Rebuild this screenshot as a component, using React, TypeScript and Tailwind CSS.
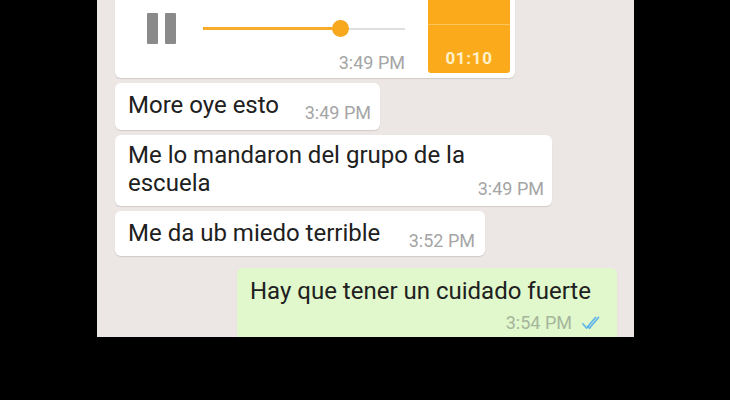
import React from "react";

const font = { fontFamily: "Roboto, 'Noto Sans', Arial, sans-serif" };

function Checks() {
  return (
    <svg width="21" height="14" viewBox="0 0 21 14" fill="none" stroke="#62b5e8" strokeWidth="1.8" strokeLinecap="round" strokeLinejoin="round">
      <path d="M1 8 L4.6 12 L13.5 1.5" />
      <path d="M7.6 12 L16.5 1.5" />
      <path d="M6 10.4 L7.6 12" />
    </svg>
  );
}

export default function App() {
  return (
    <div className="w-[730px] h-[400px] bg-black overflow-hidden" style={font}>
      <div className="ml-[97px] w-[537px] h-[337px] overflow-hidden bg-[#ece6e4] flex flex-col pl-[18px]">
        {/* audio bubble */}
        <div className="mt-[-12px] h-[90px] w-[400px] shrink-0 bg-white rounded-[6px] shadow-[0_1px_1px_rgba(0,0,0,0.12)] flex">
          <div className="pl-[32px] pt-[25px] flex flex-col w-[290px]">
            <div className="flex items-center h-[31px]">
              <div className="w-[11px] h-[31px] bg-[#8a8a8a] rounded-[1px]" />
              <div className="w-[11px] h-[31px] bg-[#8a8a8a] rounded-[1px] ml-[7px]" />
              <div className="relative ml-[27px] w-[202px] h-[31px] flex items-center">
                <div className="w-[138px] h-[3px] bg-[#f7ad2a]" />
                <div className="flex-1 h-[2px] bg-[#dedede]" />
                <div className="absolute left-[129px] top-[7px] w-[17px] h-[17px] rounded-full bg-[#f8a81c]" />
              </div>
            </div>
            <div className="mt-[9px] w-[258px] text-right text-[18px] leading-[20px] text-[#a5a5a5]">3:49 PM</div>
          </div>
          <div className="ml-[23px] mt-[5px] mb-[5px] w-[82px] bg-[#fbaa1b] rounded-[3px] flex flex-col">
            <div className="mt-[31px] h-px bg-[#fcc55e]" />
            <div className="flex-1" />
            <div className="pb-[5px] text-center text-[17px] leading-[20px] font-bold tracking-[0.04em] text-[#fff1c9]">01:10</div>
          </div>
        </div>

        {/* More oye esto */}
        <div className="mt-[5px] w-[265px] shrink-0 bg-white rounded-[6px] shadow-[0_1px_1px_rgba(0,0,0,0.12)] pl-[13px] pr-[9px] pt-[8px] pb-[11px] flex items-end justify-between">
          <span className="text-[24px] leading-[28px] text-[#202020] whitespace-nowrap">More oye esto</span>
          <span className="mb-[-4px] text-[18px] leading-[20px] text-[#a5a5a5] whitespace-nowrap">3:49 PM</span>
        </div>

        {/* Me lo mandaron */}
        <div className="mt-[5px] w-[437px] shrink-0 bg-white rounded-[6px] shadow-[0_1px_1px_rgba(0,0,0,0.12)] pl-[13px] pr-[8px] pt-[6px] pb-[7px] flex flex-col">
          <span className="text-[24px] leading-[28px] text-[#202020]">
            Me lo mandaron del grupo de la
            <br />
            escuela
          </span>
          <span className="self-end mt-[-18px] text-[18px] leading-[20px] text-[#a5a5a5] whitespace-nowrap">3:49 PM</span>
        </div>

        {/* Me da ub miedo terrible */}
        <div className="mt-[5px] w-[370px] shrink-0 bg-white rounded-[6px] shadow-[0_1px_1px_rgba(0,0,0,0.12)] pl-[13px] pr-[10px] pt-[8px] pb-[9px] flex items-end justify-between">
          <span className="text-[24px] leading-[28px] text-[#202020] whitespace-nowrap">Me da ub miedo terrible</span>
          <span className="mb-[-4px] text-[18px] leading-[20px] text-[#a5a5a5] whitespace-nowrap">3:52 PM</span>
        </div>

        {/* outgoing */}
        <div className="mt-[12px] self-end mr-[17px] w-[380px] shrink-0 bg-[#e0f8cb] rounded-[6px] shadow-[0_1px_1px_rgba(0,0,0,0.12)] pl-[13px] pr-[14px] pt-[9px] pb-[8px] flex flex-col">
          <span className="text-[24px] leading-[28px] text-[#202020] whitespace-nowrap">Hay que tener un cuidado fuerte</span>
          <div className="mt-[8px] flex items-center justify-end">
            <span className="text-[18px] leading-[20px] text-[#a6b59c] whitespace-nowrap">3:54 PM</span>
            <span className="ml-[10px]"><Checks /></span>
          </div>
        </div>
      </div>
    </div>
  );
}
